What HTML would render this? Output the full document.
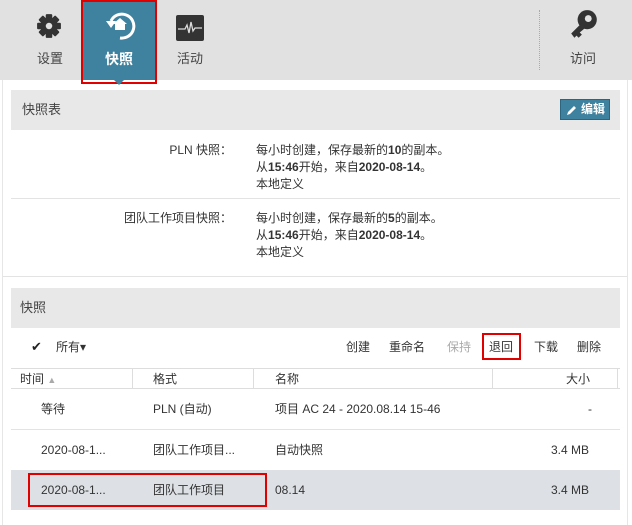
<!DOCTYPE html>
<html><head><meta charset="utf-8"><style>
*{margin:0;padding:0;box-sizing:border-box}
body{width:632px;height:525px;overflow:hidden;background:#fff;font-family:"Liberation Sans","Noto Sans CJK SC",sans-serif;font-size:12px;color:#333;position:relative}
.a{position:absolute;white-space:nowrap;line-height:16px}
.bar{left:0;top:0;width:632px;height:80px;background:#e1e1e1}
.tab{text-align:center;font-size:13px;color:#444}
.hdr{background:#e8e8e8;left:11px;width:609px;height:40px}
.line{background:#e3e3e3;height:1px}
b{font-weight:bold}
</style></head><body>
<div class="a bar"></div>
<div class="a" style="left:539px;top:10px;height:60px;border-left:1px dotted #aaa"></div>
<svg class="a" style="left:36px;top:13px" width="26" height="26" viewBox="0 0 24 24"><g fill="#333"><circle cx="12" cy="12" r="8"/><g id="t"><rect x="9" y="1" width="6" height="22" rx="1"/></g><use href="#t" transform="rotate(45 12 12)"/><use href="#t" transform="rotate(90 12 12)"/><use href="#t" transform="rotate(135 12 12)"/></g><circle cx="12" cy="12" r="3" fill="#e1e1e1"/></svg>
<div class="a tab" style="left:30px;top:51px;width:40px">设置</div>
<div class="a" style="left:81px;top:0;width:76px;height:84px;border:2px solid #e00000;"></div>
<div class="a" style="left:83px;top:2px;width:72px;height:78px;background:#3f829f"></div>
<div class="a" style="left:114px;top:80px;width:0;height:0;border-left:5px solid transparent;border-right:5px solid transparent;border-top:5px solid #3f829f"></div>
<svg class="a" style="left:103px;top:11px" width="34" height="30" viewBox="0 0 34 30"><path d="M8 10 A12 12 0 1 1 17 27" fill="none" stroke="#fff" stroke-width="3"/><path d="M3 10 L13 10 L8 17Z" fill="#fff"/><path d="M17 7 L24 13 L22 13 L22 19 L12 19 L12 13 L10 13Z" fill="#fff"/></svg>
<div class="a tab" style="left:83px;top:51px;width:72px;color:#fff;font-weight:bold;font-size:14px">快照</div>
<svg class="a" style="left:176px;top:15px" width="28" height="26" viewBox="0 0 28 26"><rect width="28" height="26" rx="2" fill="#333"/><path d="M2 14 H9 L11 10 L13 18 L15 7 L17 16 L19 13 H26" fill="none" stroke="#ddd" stroke-width="1.3"/></svg>
<div class="a tab" style="left:170px;top:51px;width:40px">活动</div>
<svg class="a" style="left:569px;top:9px" width="30" height="32" viewBox="0 0 28 30"><circle cx="17" cy="10" r="9" fill="#333"/><circle cx="18" cy="9" r="3.2" fill="#e1e1e1"/><path d="M12 13 L2 23 L5 27 L7 25 L9 27 L12 24 L10 22 L16 17Z" fill="#333"/></svg>
<div class="a tab" style="left:563px;top:51px;width:40px">访问</div>
<div class="a" style="left:2px;top:80px;width:1px;height:445px;background:#e6e6e6"></div>
<div class="a" style="left:627px;top:80px;width:1px;height:445px;background:#e6e6e6"></div>
<div class="a hdr" style="top:90px"></div>
<div class="a" style="left:22px;top:102px;font-size:13px;color:#444">快照表</div>
<div class="a" style="left:560px;top:99px;width:50px;height:21px;background:#3f829f;border:1px solid #2c6580;color:#fff;font-weight:bold;font-size:12px;line-height:19px;padding-left:20px">编辑</div>
<svg class="a" style="left:566px;top:104px" width="12" height="12" viewBox="0 0 12 12"><path d="M1 11 L2 8 L8 2 L10 4 L4 10Z" fill="#fff"/></svg>
<div class="a" style="left:100px;top:142px;width:132px;text-align:right">PLN 快照：</div>
<div class="a" style="left:256px;top:142px;line-height:17px">每小时创建，保存最新的<b>10</b>的副本。<br>从<b>15:46</b>开始，来自<b>2020-08-14</b>。<br>本地定义</div>
<div class="a line" style="left:11px;top:198px;width:609px"></div>
<div class="a" style="left:60px;top:210px;width:172px;text-align:right">团队工作项目快照：</div>
<div class="a" style="left:256px;top:210px;line-height:17px">每小时创建，保存最新的<b>5</b>的副本。<br>从<b>15:46</b>开始，来自<b>2020-08-14</b>。<br>本地定义</div>
<div class="a line" style="left:3px;top:276px;width:624px"></div>
<div class="a hdr" style="top:288px"></div>
<div class="a" style="left:20px;top:300px;font-size:13px;color:#444">快照</div>
<div class="a" style="left:31px;top:339px;font-size:13px;color:#222">✔</div>
<div class="a" style="left:56px;top:339px">所有▾</div>
<div class="a" style="left:346px;top:339px">创建</div>
<div class="a" style="left:389px;top:339px">重命名</div>
<div class="a" style="left:447px;top:339px;color:#aaa">保持</div>
<div class="a" style="left:482px;top:333px;width:39px;height:27px;border:2px solid #e00000"></div>
<div class="a" style="left:489px;top:339px">退回</div>
<div class="a" style="left:534px;top:339px">下载</div>
<div class="a" style="left:577px;top:339px">删除</div>
<div class="a line" style="left:11px;top:368px;width:609px;background:#ddd"></div>
<div class="a line" style="left:11px;top:388px;width:609px;background:#ddd"></div>
<div class="a" style="left:132px;top:369px;width:1px;height:19px;background:#ddd"></div>
<div class="a" style="left:253px;top:369px;width:1px;height:19px;background:#ddd"></div>
<div class="a" style="left:492px;top:369px;width:1px;height:19px;background:#ddd"></div>
<div class="a" style="left:617px;top:369px;width:1px;height:19px;background:#ddd"></div>
<div class="a" style="left:20px;top:371px">时间 <span style="color:#aaa;font-size:9px">▲</span></div>
<div class="a" style="left:153px;top:371px">格式</div>
<div class="a" style="left:275px;top:371px">名称</div>
<div class="a" style="left:566px;top:371px">大小</div>
<div class="a" style="left:41px;top:401px">等待</div>
<div class="a" style="left:153px;top:401px">PLN (自动)</div>
<div class="a" style="left:275px;top:401px">项目 AC 24 - 2020.08.14 15-46</div>
<div class="a" style="left:588px;top:401px">-</div>
<div class="a line" style="left:11px;top:429px;width:609px"></div>
<div class="a" style="left:41px;top:442px">2020-08-1...</div>
<div class="a" style="left:153px;top:442px">团队工作项目...</div>
<div class="a" style="left:275px;top:442px">自动快照</div>
<div class="a" style="left:551px;top:442px">3.4 MB</div>
<div class="a" style="left:11px;top:470px;width:609px;height:40px;background:#dde1e5"></div>
<div class="a" style="left:28px;top:473px;width:239px;height:34px;border:2px solid #e00000"></div>
<div class="a" style="left:41px;top:482px">2020-08-1...</div>
<div class="a" style="left:153px;top:482px">团队工作项目</div>
<div class="a" style="left:275px;top:482px">08.14</div>
<div class="a" style="left:551px;top:482px">3.4 MB</div>
</body></html>
